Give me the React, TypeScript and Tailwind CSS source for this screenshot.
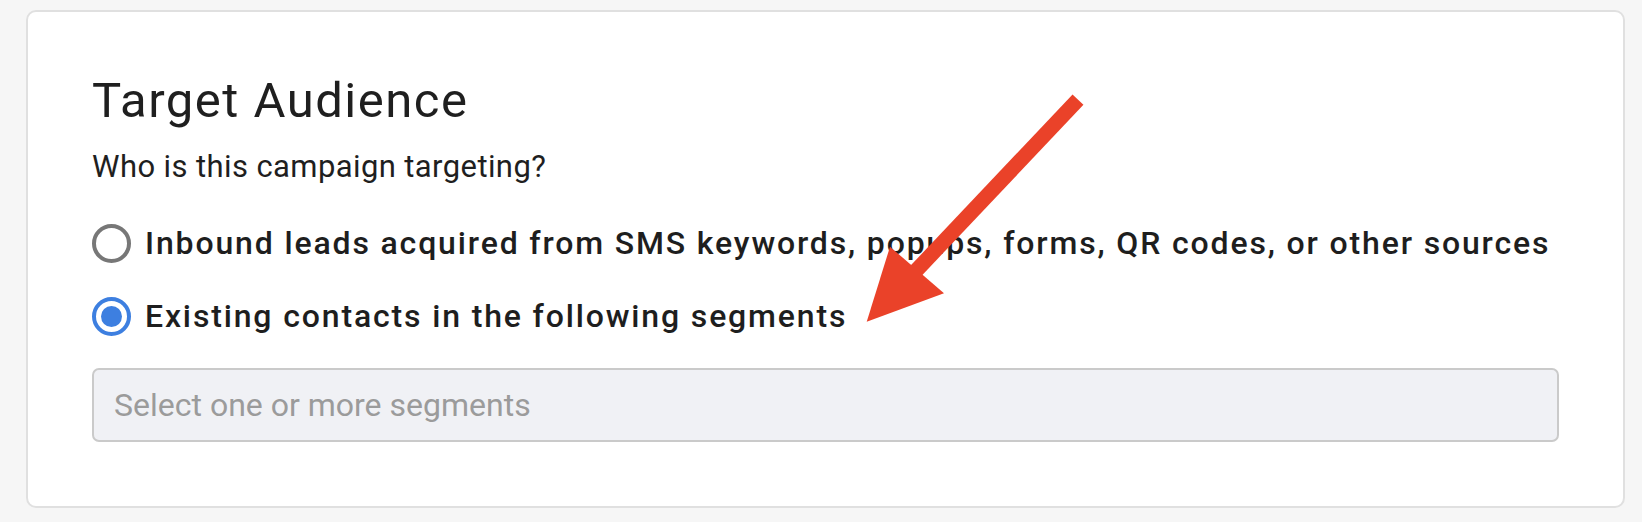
import React from "react";

export default function App() {
  return (
    <div
      className="relative w-[1642px] h-[522px] bg-[#f6f6f6] pt-[10px] pl-[26px] pr-[17px] overflow-hidden"
      style={{ fontFamily: "Roboto, 'Noto Sans', sans-serif" }}
    >
      <div className="h-[498px] rounded-[10px] border-2 border-[#e0e0e0] bg-white px-[64px] pt-[61px]">
        <h1 className="text-[49px] leading-[56px] font-normal tracking-[1.5px] text-[#1f1f1f]">
          Target Audience
        </h1>
        <p className="mt-[20px] text-[31px] leading-[36px] text-[#1f1f1f] tracking-[0.4px]">
          Who is this campaign targeting?
        </p>
        <div className="mt-[38px] flex flex-col gap-[33px]">
          <label className="flex h-[40px] items-center gap-[14px]">
            <span className="flex h-[39px] w-[39px] shrink-0 items-center justify-center rounded-full border-[4px] border-[#777777]" />
            <span className="text-[32px] leading-[40px] font-medium tracking-[1.85px] text-[#1e1e1e]">
              Inbound leads acquired from SMS keywords, popups, forms, QR codes, or other sources
            </span>
          </label>
          <label className="flex h-[40px] items-center gap-[14px]">
            <span className="flex h-[39px] w-[39px] shrink-0 items-center justify-center rounded-full border-[4px] border-[#3d7fe0]">
              <span className="h-[21px] w-[21px] rounded-full bg-[#3d7fe0]" />
            </span>
            <span className="text-[32px] leading-[40px] font-medium tracking-[1.85px] text-[#1e1e1e]">
              Existing contacts in the following segments
            </span>
          </label>
        </div>
        <div className="mt-[32px] flex h-[74px] items-center rounded-[7px] border-2 border-[#cacaca] bg-[#f0f1f5] px-[20px]">
          <span className="text-[32px] leading-[38px] text-[#9b9b9b]">Select one or more segments</span>
        </div>
      </div>
      <svg
        className="pointer-events-none absolute left-0 top-0"
        width="1642"
        height="522"
        viewBox="0 0 1642 522"
      >
        <line x1="1078" y1="99.6" x2="912" y2="275" stroke="#ea4229" strokeWidth="15" />
        <polygon points="890,246.7 944,293.3 866.7,321.7" fill="#ea4229" />
      </svg>
    </div>
  );
}
